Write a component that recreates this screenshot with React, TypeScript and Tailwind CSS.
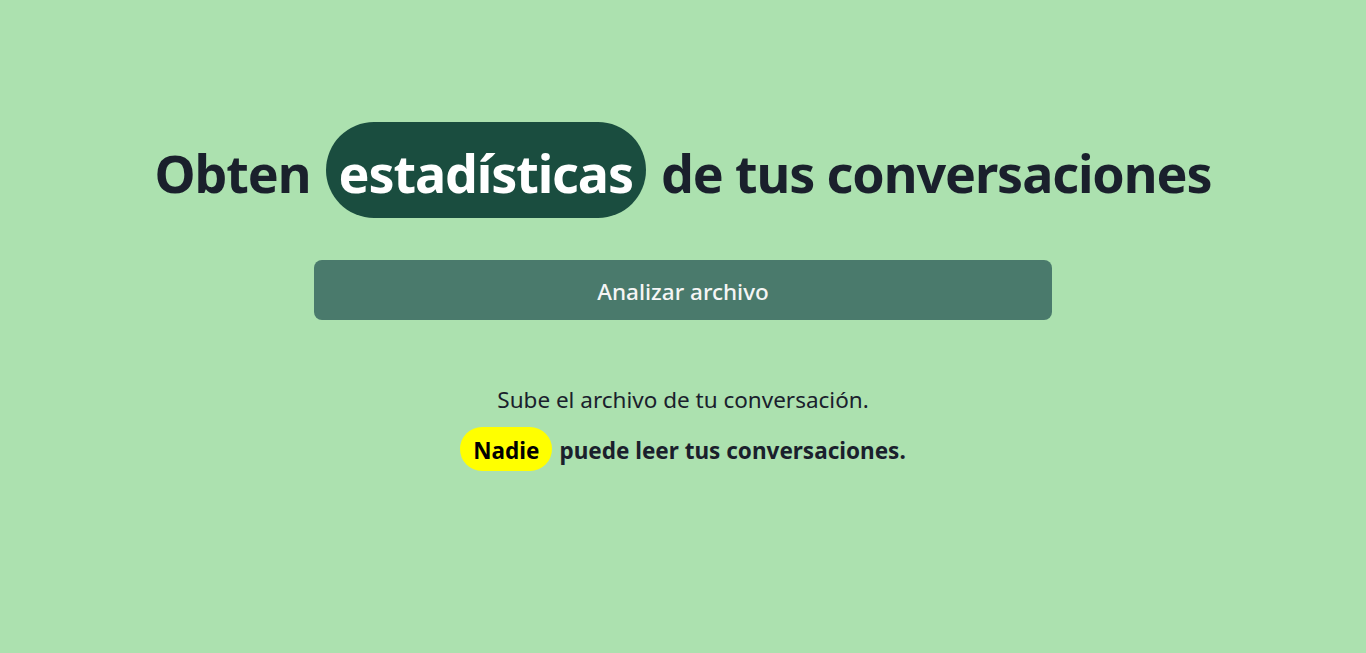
import React from "react";

export default function App() {
  return (
    <div
      className="min-h-[653px] w-full bg-[#ace1af] text-[#1a202c] flex flex-col items-center"
      style={{ fontFamily: '"Noto Sans", "Open Sans", sans-serif' }}
    >
      <h1 className="mt-[122px] flex items-center text-[52px] font-bold leading-none tracking-[-1.1px]">
        <span className="pt-[6px]">Obten</span>
        <span className="ml-[15px] mr-[15px] flex h-[96px] items-center rounded-full bg-[#1a4d3f] px-[13px] pt-[6px] text-white">
          estadísticas
        </span>
        <span className="pt-[6px]">de tus conversaciones</span>
      </h1>
      <button className="mt-[42px] h-[60px] w-[738px] rounded-lg bg-[#4a7a6c] pt-[3px] text-[22.5px] font-medium text-[#f5f5f5]">
        Analizar archivo
      </button>
      <p className="mt-[65px] text-[22.5px] leading-[30px] text-[#1a202c]">
        Sube el archivo de tu conversación.
      </p>
      <p className="mt-[12px] flex items-center text-[22.5px] font-bold">
        <span className="flex h-[44px] items-center rounded-full bg-[#ffff00] px-[13px] pt-[3px] text-black">
          Nadie
        </span>
        <span className="ml-[7px] pt-[3px]">puede leer tus conversaciones.</span>
      </p>
    </div>
  );
}
